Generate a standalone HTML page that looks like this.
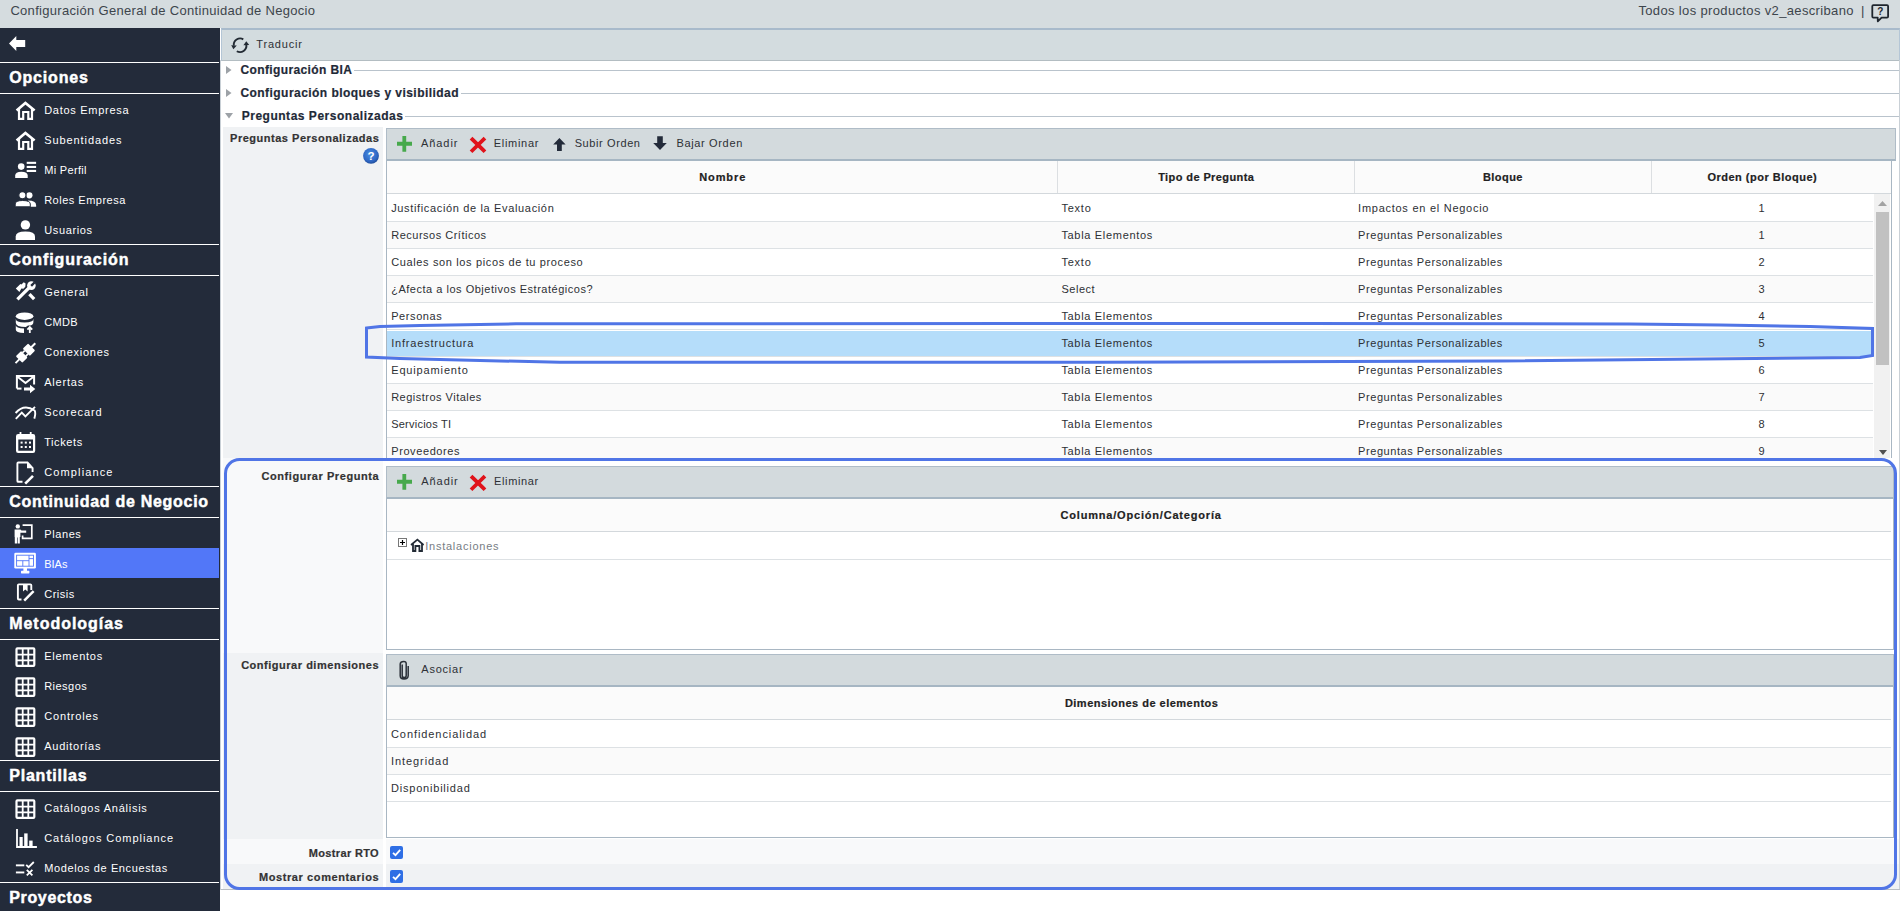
<!DOCTYPE html>
<html><head><meta charset="utf-8"><style>
*{margin:0;padding:0;box-sizing:border-box;}
html,body{width:1900px;height:911px;overflow:hidden;background:#fff;font-family:"Liberation Sans", sans-serif;}
.t{position:absolute;white-space:nowrap;line-height:1;}
.a{position:absolute;}
svg.i{position:absolute;overflow:visible;}

.b{-webkit-text-stroke:0.2px currentColor;}
.h{-webkit-text-stroke:0.45px currentColor;}

</style></head><body>
<!-- top bar -->
<div class="a" style="left:0;top:0;width:1900px;height:28px;background:#d5dcdf;"></div>
<!-- sidebar -->
<div class="a" style="left:0;top:28px;width:220px;height:883px;background:#232b3a;"></div>
<div class="a" style="left:220px;top:28px;width:1680px;height:863px;background:#fff;"></div>
<!-- sidebar lines -->
<div class="a" style="left:0;top:62px;width:219px;height:1px;background:#fff;"></div>
<div class="a" style="left:0;top:93px;width:219px;height:1px;background:#fff;"></div>
<div class="a" style="left:0;top:244px;width:219px;height:1px;background:#fff;"></div>
<div class="a" style="left:0;top:275px;width:219px;height:1px;background:#fff;"></div>
<div class="a" style="left:0;top:486px;width:219px;height:1px;background:#fff;"></div>
<div class="a" style="left:0;top:517px;width:219px;height:1px;background:#fff;"></div>
<div class="a" style="left:0;top:608px;width:219px;height:1px;background:#fff;"></div>
<div class="a" style="left:0;top:639px;width:219px;height:1px;background:#fff;"></div>
<div class="a" style="left:0;top:760px;width:219px;height:1px;background:#fff;"></div>
<div class="a" style="left:0;top:791px;width:219px;height:1px;background:#fff;"></div>
<div class="a" style="left:0;top:882px;width:219px;height:1px;background:#fff;"></div>
<!-- BIAs highlight -->
<div class="a" style="left:0;top:548px;width:219px;height:30px;background:#5277f8;"></div>

<!-- main toolbar -->
<div class="a" style="left:221px;top:28px;width:1679px;height:33px;background:#d3dcdf;border-top:2px solid #a8bacb;border-left:1px solid #b4c6d6;border-right:1px solid #b4c6d6;border-bottom:1px solid #b3bdc2;"></div>
<!-- container left border -->
<div class="a" style="left:220px;top:60px;width:1px;height:830px;background:#c9d0d6;"></div>
<div class="a" style="left:1899px;top:60px;width:1px;height:830px;background:#c9d0d6;"></div>
<div class="a" style="left:221px;top:889px;width:1679px;height:1px;background:#b9bec3;"></div>

<!-- heading lines -->
<div class="a" style="left:354px;top:70px;width:1545px;height:1px;background:#b9c3cc;"></div>
<div class="a" style="left:461px;top:93px;width:1438px;height:1px;background:#b9c3cc;"></div>
<div class="a" style="left:405px;top:116px;width:1494px;height:1px;background:#b9c3cc;"></div>
<!-- heading triangles -->
<svg class="i" style="left:226px;top:66px" width="6" height="8"><path d="M0 0 L5.5 4 L0 8Z" fill="#9da2a7"/></svg>
<svg class="i" style="left:226px;top:89px" width="6" height="8"><path d="M0 0 L5.5 4 L0 8Z" fill="#9da2a7"/></svg>
<svg class="i" style="left:225px;top:113px" width="8" height="6"><path d="M0 0 L8 0 L4 5.5Z" fill="#9da2a7"/></svg>

<!-- label panels -->
<div class="a" style="left:223px;top:127px;width:160px;height:331px;background:#f0f2f4;"></div>
<div class="a" style="left:223px;top:458px;width:160px;height:195px;background:#f8f9fa;"></div>
<div class="a" style="left:223px;top:653px;width:160px;height:186px;background:#f0f2f4;"></div>
<div class="a" style="left:223px;top:839px;width:1676px;height:25px;background:#f8f9fa;"></div>
<div class="a" style="left:223px;top:864px;width:1676px;height:25px;background:#f0f2f4;"></div>
<div class="a" style="left:383px;top:839px;width:3px;height:50px;background:#fff;"></div>

<!-- ===== table 1 ===== -->
<div class="a" style="left:386px;top:128px;width:1510px;height:33px;background:#d3dadd;border:1px solid #afbcc7;border-bottom:2px solid #a6b6c3;"></div>
<div class="a" style="left:386px;top:161px;width:1506px;height:297px;background:#fff;border-left:1px solid #a9b7c3;border-right:1px solid #a9b7c3;"></div>
<div class="a" style="left:387px;top:161px;width:1504px;height:33px;background:#fbfbfb;border-bottom:1px solid #d3d8dc;"></div>
<div class="a" style="left:1057px;top:161px;width:1px;height:32px;background:#dcdfe2;"></div>
<div class="a" style="left:1354px;top:161px;width:1px;height:32px;background:#dcdfe2;"></div>
<div class="a" style="left:1651px;top:161px;width:1px;height:32px;background:#dcdfe2;"></div>
<!-- rows bg -->
<div class="a" style="left:387px;top:221px;width:1486px;height:27px;background:#fafafa;"></div>
<div class="a" style="left:387px;top:275px;width:1486px;height:27px;background:#fafafa;"></div>
<div class="a" style="left:387px;top:383px;width:1486px;height:27px;background:#fafafa;"></div>
<div class="a" style="left:387px;top:437px;width:1486px;height:21px;background:#fafafa;"></div>
<div class="a" style="left:387px;top:331px;width:1486px;height:25px;background:#b5ddfa;"></div>
<!-- row lines -->
<div class="a" style="left:387px;top:221px;width:1486px;height:1px;background:#dde1e4;"></div>
<div class="a" style="left:387px;top:248px;width:1486px;height:1px;background:#dde1e4;"></div>
<div class="a" style="left:387px;top:275px;width:1486px;height:1px;background:#dde1e4;"></div>
<div class="a" style="left:387px;top:302px;width:1486px;height:1px;background:#dde1e4;"></div>
<div class="a" style="left:387px;top:329px;width:1486px;height:1px;background:#dde1e4;"></div>
<div class="a" style="left:387px;top:356px;width:1486px;height:1px;background:#dde1e4;"></div>
<div class="a" style="left:387px;top:383px;width:1486px;height:1px;background:#dde1e4;"></div>
<div class="a" style="left:387px;top:410px;width:1486px;height:1px;background:#dde1e4;"></div>
<div class="a" style="left:387px;top:437px;width:1486px;height:1px;background:#dde1e4;"></div>
<!-- scrollbar -->
<div class="a" style="left:1874px;top:194px;width:16px;height:264px;background:#f1f1f1;"></div>
<div class="a" style="left:1876px;top:212px;width:13px;height:153px;background:#c1c1c1;"></div>
<svg class="i" style="left:1878px;top:201px" width="9" height="5"><path d="M0 5 L4.5 0 L9 5Z" fill="#a3a3a3"/></svg>
<svg class="i" style="left:1879px;top:450px" width="8" height="5"><path d="M0 0 L8 0 L4 5Z" fill="#505050"/></svg>

<!-- ===== table 2 ===== -->
<div class="a" style="left:386px;top:466px;width:1508px;height:33px;background:#d3dadd;border:1px solid #afbcc7;border-bottom:2px solid #a6b6c3;"></div>
<div class="a" style="left:386px;top:499px;width:1508px;height:151px;background:#fff;border-left:1px solid #a9b7c3;border-right:1px solid #a9b7c3;border-bottom:1px solid #a9b7c3;"></div>
<div class="a" style="left:387px;top:499px;width:1504px;height:33px;background:#fbfbfb;border-bottom:1px solid #d3d8dc;"></div>
<div class="a" style="left:387px;top:559px;width:1504px;height:1px;background:#dde1e4;"></div>
<svg class="i" style="left:398px;top:538px" width="9" height="9"><rect x="0.5" y="0.5" width="8" height="8" fill="#fff" stroke="#777"/><path d="M2 4.5H7M4.5 2V7" stroke="#000" stroke-width="1.2"/></svg>

<!-- ===== table 3 ===== -->
<div class="a" style="left:386px;top:654px;width:1508px;height:33px;background:#d3dadd;border:1px solid #afbcc7;border-bottom:2px solid #a6b6c3;"></div>
<div class="a" style="left:386px;top:687px;width:1508px;height:151px;background:#fff;border-left:1px solid #a9b7c3;border-right:1px solid #a9b7c3;border-bottom:1px solid #a9b7c3;"></div>
<div class="a" style="left:387px;top:687px;width:1504px;height:33px;background:#fbfbfb;border-bottom:1px solid #d3d8dc;"></div>
<div class="a" style="left:387px;top:747px;width:1504px;height:27px;background:#fafafa;"></div>
<div class="a" style="left:387px;top:747px;width:1504px;height:1px;background:#dde1e4;"></div>
<div class="a" style="left:387px;top:774px;width:1504px;height:1px;background:#dde1e4;"></div>
<div class="a" style="left:387px;top:801px;width:1504px;height:1px;background:#dde1e4;"></div>

<!-- checkboxes -->
<svg class="i" style="left:390px;top:846px" width="13" height="13"><rect width="13" height="13" rx="2" fill="#2f6fe5"/><path d="M3 6.8 L5.5 9.2 L10.2 3.8" stroke="#fff" stroke-width="1.8" fill="none"/></svg>
<svg class="i" style="left:390px;top:870px" width="13" height="13"><rect width="13" height="13" rx="2" fill="#2f6fe5"/><path d="M3 6.8 L5.5 9.2 L10.2 3.8" stroke="#fff" stroke-width="1.8" fill="none"/></svg>

<!-- annotations -->
<svg class="i" style="left:0;top:0" width="1900" height="911">
<rect x="225.5" y="459.5" width="1670" height="429" rx="14" ry="14" fill="none" stroke="#5075e6" stroke-width="3"/>
<path d="M366.5 328 L380 326.5 L420 325.5 L516 323.8 L1300 323.5 L1630 324 L1720 325 L1810 326.5 L1872.5 328.5 L1872.5 355.5 L1860 357.5 L1500 361 L1100 362.2 L560 362.2 L470 360.3 L400 358.5 L366.5 357 Z" fill="none" stroke="#5075e6" stroke-width="3"/>
</svg>
<!-- back arrow -->
<svg class="i" style="left:0;top:0" width="1900" height="911">
<path d="M9 43.5 L16.3 36 L16.3 40 L25.2 40 L25.2 47 L16.3 47 L16.3 51 Z" fill="#fff"/>
<!-- sync icon -->
<g fill="none" stroke="#222a33" stroke-width="1.9">
<path d="M243.3 39.3 A6.4 6.4 0 0 0 233.8 45.6"/>
<path d="M236.8 51.2 A6.4 6.4 0 0 0 246.3 44.6"/>
</g>
<path d="M231.2 45.2 L236.8 45.4 L233.4 49.2 Z" fill="#222a33"/>
<path d="M243.4 45.2 L249.2 45 L246.3 41.3 Z" fill="#222a33"/>
<!-- help bubble -->
<path d="M1873.4 5.2 H1887 Q1888.1 5.2 1888.1 6.3 V16.5 Q1888.1 17.6 1887 17.6 H1881.6 L1877.8 21.3 L1877.7 17.6 H1873.4 Q1872.3 17.6 1872.3 16.5 V6.3 Q1872.3 5.2 1873.4 5.2 Z" fill="none" stroke="#1f262e" stroke-width="1.8" stroke-linejoin="round"/>
<text x="1880.3" y="14.8" font-family="Liberation Sans" font-weight="700" font-size="10" fill="#1f262e" text-anchor="middle">?</text>

<!-- sidebar icons (white) -->
<g fill="#fff" stroke="none">
  <!-- house outlines -->
  <g id="house">
  <path d="M16.6 110.6 L25.4 103 L34.6 110.6" fill="none" stroke="#fff" stroke-width="2.6" stroke-linejoin="miter"/>
  <path d="M19 108.8 V118.9 H23.2 V112 H28.3 V118.9 H32 V108.8" fill="none" stroke="#fff" stroke-width="2.2"/>
  </g>
  <use href="#house" y="30"/>
  <!-- mi perfil -->
  <circle cx="21.2" cy="166.6" r="3.3"/>
  <path d="M15.2 178 V175.5 Q15.2 171.7 21.4 171.7 Q27.7 171.7 27.7 175.5 V178 Z"/>
  <rect x="26.7" y="161.8" width="9.4" height="2.1"/>
  <rect x="26.7" y="165.9" width="9.4" height="2.1"/>
  <rect x="26.7" y="169.9" width="9.4" height="2.1"/>
  <!-- roles -->
  <circle cx="29.4" cy="195.3" r="3.1"/>
  <path d="M28 200.5 Q36.1 200.5 36.1 205 V206.8 H30.5 Z"/>
  <circle cx="22.4" cy="195.3" r="3.6" stroke="#232b3a" stroke-width="1.2"/>
  <path d="M15.2 206.8 V204 Q15.2 200.5 22.7 200.5 Q30.3 200.5 30.3 204 V206.8 Z" stroke="#232b3a" stroke-width="1"/>
  <!-- usuarios -->
  <circle cx="25.4" cy="224.9" r="4.7"/>
  <path d="M15.7 240 V236.5 Q15.7 231.6 25.4 231.6 Q35 231.6 35 236.5 V240 Z"/>
  <!-- general tools -->
  <path d="M17.4 299.4 L29.2 287.6" stroke="#fff" stroke-width="3.3"/>
  <circle cx="31.4" cy="285.6" r="4.3"/>
  <path d="M30.3 285 L33.9 281.4 L35.6 283.1 L32 286.7 Z" fill="#232b3a"/>
  <path d="M15.8 288.6 L20.4 284 L21.4 284.6 L23.8 282.2 L25.6 283.6 L25.3 286.8 L23.4 288.8 L21.4 288.4 L19.4 291.9 Z"/>
  <path d="M29.4 294.2 L34.2 299.2" stroke="#fff" stroke-width="3.3"/>
  <!-- cmdb -->
  <ellipse cx="24.6" cy="316.2" rx="8.8" ry="3.7"/>
  <path d="M15.8 318.8 Q15.8 322.6 24.6 322.6 Q33.4 322.6 33.4 318.8 V322 Q33.4 324.8 30.5 325.5 L28 325.5 L25.8 327 Q15.8 327 15.8 322.8 Z"/>
  <path d="M15.8 325.3 Q15.8 328.3 24 328.6 V333 Q15.8 332.8 15.8 329.4 Z"/>
  <path d="M29.8 333 V327.6 M27.4 329.6 L29.8 327 L32.2 329.6" fill="none" stroke="#fff" stroke-width="1.8"/>
  <!-- conexiones plug -->
  <g transform="translate(25.4 353.2) rotate(-45)">
    <rect x="-14" y="-1" width="6" height="2"/>
    <rect x="-9" y="-4.6" width="7.5" height="9.2" rx="1"/>
    <rect x="-2" y="-3.2" width="3.4" height="1.7"/>
    <rect x="-2" y="1.5" width="3.4" height="1.7"/>
    <rect x="1.2" y="-5" width="7.6" height="10" rx="1"/>
    <rect x="8" y="-1" width="6" height="2"/>
  </g>
  <!-- alertas mail -->
  <path d="M16.9 388.6 V376 H34.1 V384.5" fill="none" stroke="#fff" stroke-width="2"/>
  <path d="M16.9 388.6 H21.5" fill="none" stroke="#fff" stroke-width="2"/>
  <path d="M17.5 376.8 L25.5 383 L33.5 376.8" fill="none" stroke="#fff" stroke-width="2"/>
  <path d="M24 387.6 H30 V384.8 L35.3 389 L30 393.2 V390.4 H24 Z"/>
  <!-- scorecard -->
  <path d="M15.6 413 Q24 403.5 34.6 410.5 Q36 413 34.3 418.6" fill="none" stroke="#fff" stroke-width="1.9"/>
  <path d="M15.8 418.8 L21.8 412.6 L25.4 416.4 L35 406.8" fill="none" stroke="#fff" stroke-width="1.9"/>
  <!-- tickets calendar -->
  <path d="M18.2 434 H33 Q35.2 434 35.2 436.2 V450.8 Q35.2 453 33 453 H18.2 Q16 453 16 450.8 V436.2 Q16 434 18.2 434 Z M18.3 439.4 V450.7 H33 V439.4 Z" fill-rule="evenodd"/>
  <rect x="19.6" y="432" width="1.8" height="3"/>
  <rect x="29.8" y="432" width="1.8" height="3"/>
  <rect x="20.6" y="441.6" width="2" height="2"/><rect x="24.8" y="441.6" width="2" height="2"/><rect x="29" y="441.6" width="2" height="2"/>
  <rect x="20.6" y="446" width="2" height="2"/><rect x="24.8" y="446" width="2" height="2"/><rect x="29" y="446" width="2" height="2"/>
  <!-- compliance file edit -->
  <path d="M22.5 481.8 H18.3 Q17.4 481.8 17.4 480.9 V463.4 Q17.4 462.5 18.3 462.5 H27.5 L32.6 468 V472" fill="none" stroke="#fff" stroke-width="1.9"/>
  <path d="M27 462.6 L32.6 468.2 L27 468.2 Z"/>
  <path d="M25.2 483.6 L33 475.8" stroke="#fff" stroke-width="2.6"/>
  <!-- planes -->
  <circle cx="17.8" cy="526.4" r="2.2"/>
  <path d="M14.6 529.6 H20.4 L21.5 530.5 H26.2 V532.8 H20.4 V537 H19.8 V543.5 H17.6 V537.6 H17 V543.5 H14.8 V537 H14.6 Z"/>
  <path d="M22.6 525.2 H31.8 V538.3 H22.6 V535.6" fill="none" stroke="#fff" stroke-width="1.7"/>
  <!-- BIAs monitor -->
  <path d="M15.6 552.8 H34.6 Q35.9 552.8 35.9 554.1 V567.2 Q35.9 568.5 34.6 568.5 H15.6 Q14.3 568.5 14.3 567.2 V554.1 Q14.3 552.8 15.6 552.8 Z"/>
  <rect x="23.4" y="568" width="3.6" height="3.2"/>
  <rect x="21" y="570.8" width="8.4" height="2.6" rx="0.6"/>
  <g fill="none" stroke="#5277f8" stroke-width="0.9">
    <rect x="16.6" y="555.2" width="16.9" height="11"/>
    <path d="M16.6 560.7 H29 M29 555.2 V566.2 M22.8 560.7 V566.2 M29 558.6 H33.5"/>
  </g>
  <!-- crisis -->
  <path d="M21.5 599.5 H18.8 Q17.9 599.5 17.9 598.6 V585.3 Q17.9 584.4 18.8 584.4 H30.4 Q31.3 584.4 31.3 585.3 V590" fill="none" stroke="#fff" stroke-width="1.9"/>
  <path d="M23 584.5 H27.6 V591.6 L25.3 589.6 L23 591.6 Z"/>
  <path d="M24.2 600.6 L33.6 591.2" stroke="#fff" stroke-width="2.5"/>
  <!-- grid icons -->
  <g id="grid">
  <path d="M17.4 647.2 H33.4 Q35.4 647.2 35.4 649.2 V665 Q35.4 667 33.4 667 H17.4 Q15.4 667 15.4 665 V649.2 Q15.4 647.2 17.4 647.2 Z
     M17.6 649.4 V653.8 H21.8 V649.4 Z M23.6 649.4 V653.8 H27.4 V649.4 Z M29.2 649.4 V653.8 H33.2 V649.4 Z
     M17.6 655.6 V659.4 H21.8 V655.6 Z M23.6 655.6 V659.4 H27.4 V655.6 Z M29.2 655.6 V659.4 H33.2 V655.6 Z
     M17.6 661.2 V664.8 H21.8 V661.2 Z M23.6 661.2 V664.8 H27.4 V661.2 Z M29.2 661.2 V664.8 H33.2 V661.2 Z" fill-rule="evenodd"/>
  </g>
  <use href="#grid" y="30"/>
  <use href="#grid" y="60"/>
  <use href="#grid" y="90"/>
  <use href="#grid" y="152"/>
  <!-- bar chart -->
  <path d="M16.1 829 H17.9 V846.1 H36.9 V847.9 H16.1 Z"/>
  <rect x="19.5" y="837" width="3.2" height="9.2"/>
  <rect x="24.2" y="833.4" width="3.4" height="12.8"/>
  <rect x="29.2" y="840.6" width="3.4" height="5.6"/>
  <rect x="33.6" y="841" width="0" height="0"/>
  <!-- modelos -->
  <rect x="15.9" y="864.4" width="8.4" height="1.9"/>
  <rect x="15.9" y="871.5" width="8.4" height="1.9"/>
  <path d="M26.2 864.8 L28.6 867.2 L33.8 862" fill="none" stroke="#fff" stroke-width="1.8"/>
  <path d="M26.8 869.8 L32.4 875.4 M32.4 869.8 L26.8 875.4" fill="none" stroke="#fff" stroke-width="1.8"/>
</g>

<!-- help circle -->
<defs>
<radialGradient id="hg" cx="0.45" cy="0.4" r="0.6">
<stop offset="0" stop-color="#4a90e2"/><stop offset="0.75" stop-color="#2f67c4"/><stop offset="1" stop-color="#1f4e9c"/>
</radialGradient>
</defs>
<circle cx="371" cy="155.8" r="7.9" fill="url(#hg)"/>
<text x="371" y="160.3" font-family="Liberation Sans" font-weight="700" font-size="11.5" fill="#fff" text-anchor="middle">?</text>

<!-- toolbar icons -->
<g id="plusx">
<path d="M397 141.8 H412 V145.8 H397 Z M402.4 136 H406.2 V151.8 H402.4 Z" fill="#47a94c"/>
<path d="M472.4 139.4 L483.6 150.4 M483.6 139.4 L472.4 150.4" stroke="#e0131b" stroke-width="3.8" stroke-linecap="square"/>
</g>
<use href="#plusx" y="338"/>
<path d="M559.4 137.9 L565.6 144.6 H561.8 V151 H557 V144.6 H553.2 Z" fill="#232b3a"/>
<path d="M657.2 136.2 H662.8 V143 H666.8 L660 149.9 L653.2 143 H657.2 Z" fill="#232b3a"/>

<!-- tree house -->
<path d="M411 545 L417.4 539.6 L423.6 545" fill="none" stroke="#222a35" stroke-width="1.7"/>
<path d="M413 544 V551 H415.4 V546 H419.4 V551 H422 V544" fill="none" stroke="#222a35" stroke-width="1.8"/>

<!-- paperclip -->
<path d="M402.2 664.5 V675.5 Q402.2 677.6 404.2 677.6 Q406.2 677.6 406.2 675.5 V663.6 Q406.2 661.4 403.8 661.4 Q400.4 661.4 400.2 664 V675.8 Q400.2 679 404 679 Q408 679 408.2 675.8 V666" fill="none" stroke="#2a3038" stroke-width="1.5"/>
</svg>

<div class="t" style="top:4.30px;font-size:13px;font-weight:400;color:#3d454c;letter-spacing:0.307px;left:10.40px;">Configuración General de Continuidad de Negocio</div>
<div class="t" style="top:4.20px;font-size:13px;font-weight:400;color:#3d454c;letter-spacing:0.354px;left:1638.40px;">Todos los productos v2_aescribano</div>
<div class="t" style="top:4.20px;font-size:13px;font-weight:400;color:#3d454c;letter-spacing:0.000px;left:1861.00px;">|</div>
<div class="t h" style="top:70.26px;font-size:16px;font-weight:700;color:#ffffff;letter-spacing:0.825px;left:9.20px;">Opciones</div>
<div class="t h" style="top:252.26px;font-size:16px;font-weight:700;color:#ffffff;letter-spacing:0.904px;left:9.20px;">Configuración</div>
<div class="t h" style="top:494.26px;font-size:16px;font-weight:700;color:#ffffff;letter-spacing:0.709px;left:9.20px;">Continuidad de Negocio</div>
<div class="t h" style="top:616.26px;font-size:16px;font-weight:700;color:#ffffff;letter-spacing:0.970px;left:9.20px;">Metodologías</div>
<div class="t h" style="top:768.26px;font-size:16px;font-weight:700;color:#ffffff;letter-spacing:0.792px;left:9.20px;">Plantillas</div>
<div class="t h" style="top:890.26px;font-size:16px;font-weight:700;color:#ffffff;letter-spacing:0.663px;left:9.20px;">Proyectos</div>
<div class="t" style="top:104.69px;font-size:11px;font-weight:400;color:#ffffff;letter-spacing:0.714px;left:44.20px;">Datos Empresa</div>
<div class="t" style="top:134.69px;font-size:11px;font-weight:400;color:#ffffff;letter-spacing:0.918px;left:44.20px;">Subentidades</div>
<div class="t" style="top:164.69px;font-size:11px;font-weight:400;color:#ffffff;letter-spacing:0.318px;left:44.20px;">Mi Perfil</div>
<div class="t" style="top:194.69px;font-size:11px;font-weight:400;color:#ffffff;letter-spacing:0.490px;left:44.20px;">Roles Empresa</div>
<div class="t" style="top:224.69px;font-size:11px;font-weight:400;color:#ffffff;letter-spacing:0.639px;left:44.20px;">Usuarios</div>
<div class="t" style="top:286.69px;font-size:11px;font-weight:400;color:#ffffff;letter-spacing:0.790px;left:44.20px;">General</div>
<div class="t" style="top:316.69px;font-size:11px;font-weight:400;color:#ffffff;letter-spacing:0.296px;left:44.20px;">CMDB</div>
<div class="t" style="top:346.69px;font-size:11px;font-weight:400;color:#ffffff;letter-spacing:0.754px;left:44.20px;">Conexiones</div>
<div class="t" style="top:376.69px;font-size:11px;font-weight:400;color:#ffffff;letter-spacing:0.805px;left:44.20px;">Alertas</div>
<div class="t" style="top:406.69px;font-size:11px;font-weight:400;color:#ffffff;letter-spacing:0.917px;left:44.20px;">Scorecard</div>
<div class="t" style="top:436.69px;font-size:11px;font-weight:400;color:#ffffff;letter-spacing:0.590px;left:44.20px;">Tickets</div>
<div class="t" style="top:466.69px;font-size:11px;font-weight:400;color:#ffffff;letter-spacing:1.132px;left:44.20px;">Compliance</div>
<div class="t" style="top:528.69px;font-size:11px;font-weight:400;color:#ffffff;letter-spacing:0.608px;left:44.20px;">Planes</div>
<div class="t" style="top:558.69px;font-size:11px;font-weight:400;color:#ffffff;letter-spacing:0.015px;left:44.20px;">BIAs</div>
<div class="t" style="top:588.69px;font-size:11px;font-weight:400;color:#ffffff;letter-spacing:0.516px;left:44.20px;">Crisis</div>
<div class="t" style="top:650.69px;font-size:11px;font-weight:400;color:#ffffff;letter-spacing:0.762px;left:44.20px;">Elementos</div>
<div class="t" style="top:680.69px;font-size:11px;font-weight:400;color:#ffffff;letter-spacing:0.472px;left:44.20px;">Riesgos</div>
<div class="t" style="top:710.69px;font-size:11px;font-weight:400;color:#ffffff;letter-spacing:0.838px;left:44.20px;">Controles</div>
<div class="t" style="top:740.69px;font-size:11px;font-weight:400;color:#ffffff;letter-spacing:0.750px;left:44.20px;">Auditorías</div>
<div class="t" style="top:802.69px;font-size:11px;font-weight:400;color:#ffffff;letter-spacing:0.752px;left:44.20px;">Catálogos Análisis</div>
<div class="t" style="top:832.69px;font-size:11px;font-weight:400;color:#ffffff;letter-spacing:0.958px;left:44.20px;">Catálogos Compliance</div>
<div class="t" style="top:862.69px;font-size:11px;font-weight:400;color:#ffffff;letter-spacing:0.615px;left:44.20px;">Modelos de Encuestas</div>
<div class="t" style="top:39.19px;font-size:11px;font-weight:400;color:#2d3035;letter-spacing:0.806px;left:256.30px;">Traducir</div>
<div class="t b" style="top:64.04px;font-size:12px;font-weight:700;color:#1f2a38;letter-spacing:0.389px;left:240.40px;">Configuración BIA</div>
<div class="t b" style="top:87.14px;font-size:12px;font-weight:700;color:#1f2a38;letter-spacing:0.455px;left:240.40px;">Configuración bloques y visibilidad</div>
<div class="t b" style="top:109.64px;font-size:12px;font-weight:700;color:#1f2a38;letter-spacing:0.516px;left:241.70px;">Preguntas Personalizadas</div>
<div class="t b" style="top:133.49px;font-size:11px;font-weight:700;color:#333;letter-spacing:0.510px;left:379.31px;transform:translateX(-100%);">Preguntas Personalizadas</div>
<div class="t" style="top:137.89px;font-size:11px;font-weight:400;color:#2d3035;letter-spacing:0.957px;left:420.90px;">Añadir</div>
<div class="t" style="top:137.89px;font-size:11px;font-weight:400;color:#2d3035;letter-spacing:0.692px;left:493.80px;">Eliminar</div>
<div class="t" style="top:137.89px;font-size:11px;font-weight:400;color:#2d3035;letter-spacing:0.597px;left:574.70px;">Subir Orden</div>
<div class="t" style="top:137.89px;font-size:11px;font-weight:400;color:#2d3035;letter-spacing:0.657px;left:676.40px;">Bajar Orden</div>
<div class="t b" style="top:172.19px;font-size:11px;font-weight:700;color:#222;letter-spacing:0.904px;left:699.20px;">Nombre</div>
<div class="t b" style="top:172.19px;font-size:11px;font-weight:700;color:#222;letter-spacing:0.403px;left:1158.20px;">Tipo de Pregunta</div>
<div class="t b" style="top:172.19px;font-size:11px;font-weight:700;color:#222;letter-spacing:0.460px;left:1482.90px;">Bloque</div>
<div class="t b" style="top:172.19px;font-size:11px;font-weight:700;color:#222;letter-spacing:0.497px;left:1707.40px;">Orden (por Bloque)</div>
<div class="t" style="top:202.89px;font-size:11px;font-weight:400;color:#2d3035;letter-spacing:0.651px;left:391.20px;">Justificación de la Evaluación</div>
<div class="t" style="top:202.89px;font-size:11px;font-weight:400;color:#2d3035;letter-spacing:0.771px;left:1061.40px;">Texto</div>
<div class="t" style="top:202.89px;font-size:11px;font-weight:400;color:#2d3035;letter-spacing:0.735px;left:1358.10px;">Impactos en el Negocio</div>
<div class="t" style="top:202.89px;font-size:11px;font-weight:400;color:#2d3035;letter-spacing:0.000px;left:1761.50px;transform:translateX(-50%);">1</div>
<div class="t" style="top:229.89px;font-size:11px;font-weight:400;color:#2d3035;letter-spacing:0.505px;left:391.20px;">Recursos Críticos</div>
<div class="t" style="top:229.89px;font-size:11px;font-weight:400;color:#2d3035;letter-spacing:0.682px;left:1061.40px;">Tabla Elementos</div>
<div class="t" style="top:229.89px;font-size:11px;font-weight:400;color:#2d3035;letter-spacing:0.555px;left:1358.10px;">Preguntas Personalizables</div>
<div class="t" style="top:229.89px;font-size:11px;font-weight:400;color:#2d3035;letter-spacing:0.000px;left:1761.50px;transform:translateX(-50%);">1</div>
<div class="t" style="top:256.89px;font-size:11px;font-weight:400;color:#2d3035;letter-spacing:0.635px;left:391.20px;">Cuales son los picos de tu proceso</div>
<div class="t" style="top:256.89px;font-size:11px;font-weight:400;color:#2d3035;letter-spacing:0.771px;left:1061.40px;">Texto</div>
<div class="t" style="top:256.89px;font-size:11px;font-weight:400;color:#2d3035;letter-spacing:0.555px;left:1358.10px;">Preguntas Personalizables</div>
<div class="t" style="top:256.89px;font-size:11px;font-weight:400;color:#2d3035;letter-spacing:0.000px;left:1761.50px;transform:translateX(-50%);">2</div>
<div class="t" style="top:283.89px;font-size:11px;font-weight:400;color:#2d3035;letter-spacing:0.516px;left:391.20px;">¿Afecta a los Objetivos Estratégicos?</div>
<div class="t" style="top:283.89px;font-size:11px;font-weight:400;color:#2d3035;letter-spacing:0.540px;left:1061.40px;">Select</div>
<div class="t" style="top:283.89px;font-size:11px;font-weight:400;color:#2d3035;letter-spacing:0.555px;left:1358.10px;">Preguntas Personalizables</div>
<div class="t" style="top:283.89px;font-size:11px;font-weight:400;color:#2d3035;letter-spacing:0.000px;left:1761.50px;transform:translateX(-50%);">3</div>
<div class="t" style="top:310.89px;font-size:11px;font-weight:400;color:#2d3035;letter-spacing:0.585px;left:391.20px;">Personas</div>
<div class="t" style="top:310.89px;font-size:11px;font-weight:400;color:#2d3035;letter-spacing:0.682px;left:1061.40px;">Tabla Elementos</div>
<div class="t" style="top:310.89px;font-size:11px;font-weight:400;color:#2d3035;letter-spacing:0.555px;left:1358.10px;">Preguntas Personalizables</div>
<div class="t" style="top:310.89px;font-size:11px;font-weight:400;color:#2d3035;letter-spacing:0.000px;left:1761.50px;transform:translateX(-50%);">4</div>
<div class="t" style="top:337.89px;font-size:11px;font-weight:400;color:#2d3035;letter-spacing:0.811px;left:391.20px;">Infraestructura</div>
<div class="t" style="top:337.89px;font-size:11px;font-weight:400;color:#2d3035;letter-spacing:0.682px;left:1061.40px;">Tabla Elementos</div>
<div class="t" style="top:337.89px;font-size:11px;font-weight:400;color:#2d3035;letter-spacing:0.555px;left:1358.10px;">Preguntas Personalizables</div>
<div class="t" style="top:337.89px;font-size:11px;font-weight:400;color:#2d3035;letter-spacing:0.000px;left:1761.50px;transform:translateX(-50%);">5</div>
<div class="t" style="top:364.89px;font-size:11px;font-weight:400;color:#2d3035;letter-spacing:0.854px;left:391.20px;">Equipamiento</div>
<div class="t" style="top:364.89px;font-size:11px;font-weight:400;color:#2d3035;letter-spacing:0.682px;left:1061.40px;">Tabla Elementos</div>
<div class="t" style="top:364.89px;font-size:11px;font-weight:400;color:#2d3035;letter-spacing:0.555px;left:1358.10px;">Preguntas Personalizables</div>
<div class="t" style="top:364.89px;font-size:11px;font-weight:400;color:#2d3035;letter-spacing:0.000px;left:1761.50px;transform:translateX(-50%);">6</div>
<div class="t" style="top:391.89px;font-size:11px;font-weight:400;color:#2d3035;letter-spacing:0.490px;left:391.20px;">Registros Vitales</div>
<div class="t" style="top:391.89px;font-size:11px;font-weight:400;color:#2d3035;letter-spacing:0.682px;left:1061.40px;">Tabla Elementos</div>
<div class="t" style="top:391.89px;font-size:11px;font-weight:400;color:#2d3035;letter-spacing:0.555px;left:1358.10px;">Preguntas Personalizables</div>
<div class="t" style="top:391.89px;font-size:11px;font-weight:400;color:#2d3035;letter-spacing:0.000px;left:1761.50px;transform:translateX(-50%);">7</div>
<div class="t" style="top:418.89px;font-size:11px;font-weight:400;color:#2d3035;letter-spacing:0.238px;left:391.20px;">Servicios TI</div>
<div class="t" style="top:418.89px;font-size:11px;font-weight:400;color:#2d3035;letter-spacing:0.682px;left:1061.40px;">Tabla Elementos</div>
<div class="t" style="top:418.89px;font-size:11px;font-weight:400;color:#2d3035;letter-spacing:0.555px;left:1358.10px;">Preguntas Personalizables</div>
<div class="t" style="top:418.89px;font-size:11px;font-weight:400;color:#2d3035;letter-spacing:0.000px;left:1761.50px;transform:translateX(-50%);">8</div>
<div class="t" style="top:445.89px;font-size:11px;font-weight:400;color:#2d3035;letter-spacing:0.601px;left:391.20px;">Proveedores</div>
<div class="t" style="top:445.89px;font-size:11px;font-weight:400;color:#2d3035;letter-spacing:0.682px;left:1061.40px;">Tabla Elementos</div>
<div class="t" style="top:445.89px;font-size:11px;font-weight:400;color:#2d3035;letter-spacing:0.555px;left:1358.10px;">Preguntas Personalizables</div>
<div class="t" style="top:445.89px;font-size:11px;font-weight:400;color:#2d3035;letter-spacing:0.000px;left:1761.50px;transform:translateX(-50%);">9</div>
<div class="t b" style="top:471.29px;font-size:11px;font-weight:700;color:#333;letter-spacing:0.563px;left:379.16px;transform:translateX(-100%);">Configurar Pregunta</div>
<div class="t" style="top:475.99px;font-size:11px;font-weight:400;color:#2d3035;letter-spacing:0.957px;left:421.20px;">Añadir</div>
<div class="t" style="top:475.99px;font-size:11px;font-weight:400;color:#2d3035;letter-spacing:0.649px;left:494.00px;">Eliminar</div>
<div class="t b" style="top:509.99px;font-size:11px;font-weight:700;color:#222;letter-spacing:0.808px;left:1060.50px;">Columna/Opción/Categoría</div>
<div class="t" style="top:540.69px;font-size:11px;font-weight:400;color:#777d84;letter-spacing:0.763px;left:425.20px;">Instalaciones</div>
<div class="t b" style="top:659.59px;font-size:11px;font-weight:700;color:#333;letter-spacing:0.521px;left:379.12px;transform:translateX(-100%);">Configurar dimensiones</div>
<div class="t" style="top:663.89px;font-size:11px;font-weight:400;color:#2d3035;letter-spacing:0.765px;left:421.30px;">Asociar</div>
<div class="t b" style="top:697.89px;font-size:11px;font-weight:700;color:#222;letter-spacing:0.485px;left:1064.90px;">Dimensiones de elementos</div>
<div class="t" style="top:728.69px;font-size:11px;font-weight:400;color:#2d3035;letter-spacing:0.922px;left:391.00px;">Confidencialidad</div>
<div class="t" style="top:755.69px;font-size:11px;font-weight:400;color:#2d3035;letter-spacing:0.927px;left:391.00px;">Integridad</div>
<div class="t" style="top:782.69px;font-size:11px;font-weight:400;color:#2d3035;letter-spacing:0.791px;left:391.00px;">Disponibilidad</div>
<div class="t b" style="top:848.09px;font-size:11px;font-weight:700;color:#333;letter-spacing:0.336px;left:378.94px;transform:translateX(-100%);">Mostrar RTO</div>
<div class="t b" style="top:872.09px;font-size:11px;font-weight:700;color:#333;letter-spacing:0.604px;left:379.20px;transform:translateX(-100%);">Mostrar comentarios</div>
</body></html>
